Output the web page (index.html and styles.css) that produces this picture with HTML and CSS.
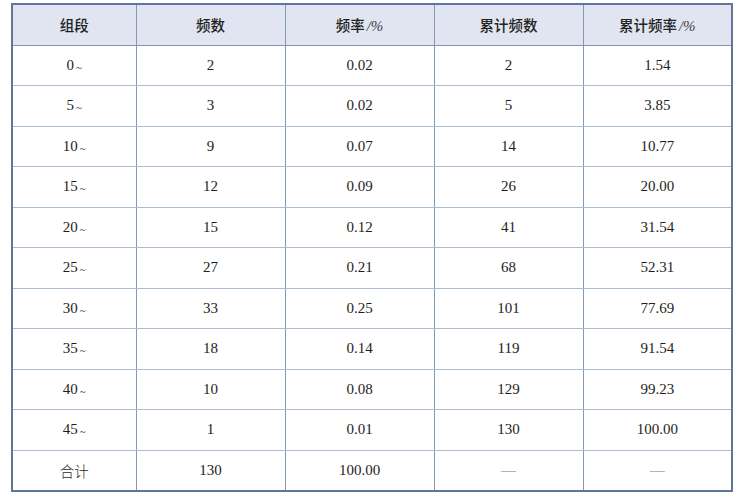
FILE: index.html
```html
<!DOCTYPE html>
<html>
<head>
<meta charset="utf-8">
<link rel="stylesheet" href="styles.css">
</head>
<body>
<table class="freq">
  <colgroup>
    <col class="c1"><col class="c"><col class="c"><col class="c"><col class="c">
  </colgroup>
  <thead>
    <tr>
      <th>组段</th>
      <th>频数</th>
      <th>频率<span class="pct">/%</span></th>
      <th>累计频数</th>
      <th>累计频率<span class="pct">/%</span></th>
    </tr>
  </thead>
  <tbody>
    <tr><td>0<span class="t">~</span></td><td>2</td><td>0.02</td><td>2</td><td>1.54</td></tr>
    <tr><td>5<span class="t">~</span></td><td>3</td><td>0.02</td><td>5</td><td>3.85</td></tr>
    <tr><td>10<span class="t">~</span></td><td>9</td><td>0.07</td><td>14</td><td>10.77</td></tr>
    <tr><td>15<span class="t">~</span></td><td>12</td><td>0.09</td><td>26</td><td>20.00</td></tr>
    <tr><td>20<span class="t">~</span></td><td>15</td><td>0.12</td><td>41</td><td>31.54</td></tr>
    <tr><td>25<span class="t">~</span></td><td>27</td><td>0.21</td><td>68</td><td>52.31</td></tr>
    <tr><td>30<span class="t">~</span></td><td>33</td><td>0.25</td><td>101</td><td>77.69</td></tr>
    <tr><td>35<span class="t">~</span></td><td>18</td><td>0.14</td><td>119</td><td>91.54</td></tr>
    <tr><td>40<span class="t">~</span></td><td>10</td><td>0.08</td><td>129</td><td>99.23</td></tr>
    <tr><td>45<span class="t">~</span></td><td>1</td><td>0.01</td><td>130</td><td>100.00</td></tr>
    <tr><td class="cjk">合计</td><td>130</td><td>100.00</td><td class="dash">—</td><td class="dash">—</td></tr>
  </tbody>
</table>
</body>
</html>
```
FILE: styles.css
```css
html, body {
  margin: 0;
  padding: 0;
  background: #ffffff;
}
.freq {
  margin: 3px 0 0 11px;
  width: 722px;
  border-collapse: collapse;
  border: 2px solid #5f7698;
  table-layout: fixed;
  font-family: "Liberation Serif", "Times New Roman", serif;
  font-size: 15px;
  color: #1e1e1e;
}
.c1 { width: 124px; }
.c { width: 149px; }
.freq th, .freq td {
  text-align: center;
  vertical-align: middle;
  padding: 0;
  border-left: 1px solid #8299b3;
  border-right: 1px solid #8299b3;
  border-top: 1px solid #aabccf;
  border-bottom: 1px solid #aabccf;
}
.freq thead tr { height: 41px; }
.freq tbody tr { height: 40.5px; }
.freq th {
  background: #e1e5f1;
  font-family: "Noto Sans CJK SC", sans-serif;
  font-weight: 500;
  font-size: 14.5px;
  color: #222;
  border-bottom: 1px solid #7f95b0;
}
.pct {
  font-family: "Liberation Serif", "Times New Roman", serif;
  font-style: italic;
  font-weight: normal;
  font-size: 15px;
  color: #444;
  margin-left: 2px;
}
.t {
  font-size: 11px;
  margin-left: 2px;
  position: relative;
  top: 1px;
}
.cjk {
  font-family: "Noto Sans CJK SC", sans-serif;
  font-weight: 300;
  font-size: 14.5px;
}
.dash {
  color: #777;
}
```
